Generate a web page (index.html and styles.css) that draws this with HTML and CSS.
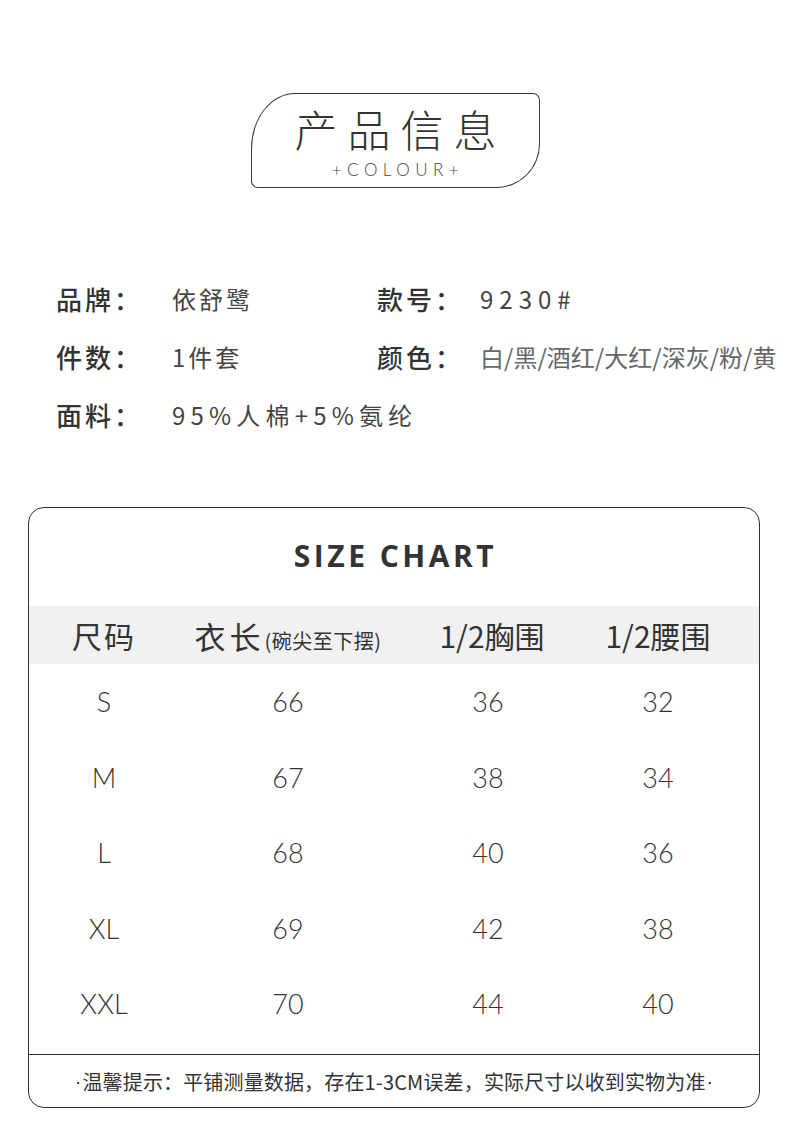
FILE: index.html
```html
<!DOCTYPE html>
<html lang="zh-CN">
<head>
<meta charset="utf-8">
<title>产品信息</title>
<link rel="stylesheet" href="styles.css">
</head>
<body>
<div class="page">
  <section class="heading">
    <div class="heading-box">
      <div class="heading-title">产品信息</div>
      <div class="heading-sub">+COLOUR+</div>
    </div>
  </section>

  <section class="info">
    <div class="info-label">品牌：</div>
    <div class="info-value spaced">依舒鹭</div>
    <div class="info-label">款号：</div>
    <div class="info-value code">9230#</div>

    <div class="info-label">件数：</div>
    <div class="info-value spaced">1件套</div>
    <div class="info-label">颜色：</div>
    <div class="info-value light">白/黑/酒红/大红/深灰/粉/黄</div>

    <div class="info-label">面料：</div>
    <div class="info-value num wide">95%人棉+5%氨纶</div>
  </section>

  <section class="chart">
    <div class="chart-title">SIZE CHART</div>
    <div class="chart-head">
      <div class="cell">尺码</div>
      <div class="cell"><span class="head-big">衣长</span><span class="head-small">(碗尖至下摆)</span></div>
      <div class="cell">1/2胸围</div>
      <div class="cell">1/2腰围</div>
    </div>
    <div class="chart-body">
      <div class="chart-row"><div class="cell">S</div><div class="cell">66</div><div class="cell">36</div><div class="cell">32</div></div>
      <div class="chart-row"><div class="cell">M</div><div class="cell">67</div><div class="cell">38</div><div class="cell">34</div></div>
      <div class="chart-row"><div class="cell">L</div><div class="cell">68</div><div class="cell">40</div><div class="cell">36</div></div>
      <div class="chart-row"><div class="cell">XL</div><div class="cell">69</div><div class="cell">42</div><div class="cell">38</div></div>
      <div class="chart-row"><div class="cell">XXL</div><div class="cell">70</div><div class="cell">44</div><div class="cell">40</div></div>
    </div>
    <div class="chart-note"><span class="dot">·</span>温馨提示：平铺测量数据，存在1-3CM误差，实际尺寸以收到实物为准<span class="dot">·</span></div>
  </section>
</div>
</body>
</html>
```

FILE: styles.css
```css
* { box-sizing: border-box; }
html, body { margin: 0; padding: 0; background: #fff; }
body {
  font-family: "Noto Sans CJK SC", "Noto Sans", sans-serif;
  color: #333;
}
.page {
  width: 790px;
  padding-top: 93px;
}

/* heading */
.heading { display: flex; justify-content: center; }
.heading-box {
  width: 289px;
  height: 95px;
  border: 1px solid #3a3a3a;
  border-radius: 44px 7px 44px 7px / 56px 7px 44px 7px;
  display: flex;
  flex-direction: column;
  align-items: center;
  padding-top: 11px;
  margin-left: 1px;
}
.heading-title {
  font-size: 43px;
  line-height: 46px;
  letter-spacing: 10px;
  margin-right: -10px;
  font-weight: 300;
  color: #333;
}
.heading-sub {
  font-family: "Lato", "Open Sans", sans-serif;
  font-weight: 300;
  font-size: 17px;
  line-height: 22px;
  letter-spacing: 5.5px;
  margin-top: 8px;
  margin-left: 5px;
  color: #444;
}

/* info */
.info {
  margin-top: 81px;
  padding-left: 56px;
  display: grid;
  grid-template-columns: 116px 205px 103px auto;
  grid-auto-rows: 58px;
  align-items: center;
}
.info-label {
  font-size: 26px;
  font-weight: 500;
  letter-spacing: 3px;
  color: #333;
  white-space: nowrap;
}
.info-value {
  font-size: 24px;
  color: #444;
  white-space: nowrap;
}
.info-value.spaced { letter-spacing: 3px; }
.info-value.num { letter-spacing: 5.2px; }
.info-value.code { letter-spacing: 6px; }
.info-value.light { color: #666; letter-spacing: 0; }
.info-value.wide { grid-column: 2 / 5; }

/* chart */
.chart {
  margin: 64px 0 0 28px;
  width: 732px;
  height: 601px;
  border: 1px solid #333;
  border-radius: 16px;
  overflow: hidden;
  display: flex;
  flex-direction: column;
}
.chart-title {
  height: 98px;
  display: flex;
  align-items: center;
  justify-content: center;
  font-family: "Open Sans", "Lato", sans-serif;
  font-weight: 700;
  font-size: 30px;
  letter-spacing: 3.5px;
  color: #333;
  padding-bottom: 4px;
  padding-left: 3px;
}
.chart-head, .chart-row {
  display: grid;
  grid-template-columns: 150px 218px 182px 158px 1fr;
  align-items: center;
}
.chart-head {
  height: 58px;
  background: #f1f1f1;
  font-size: 30px;
  color: #333;
}
.chart-head .cell { text-align: center; white-space: nowrap; }
.chart-head .cell:first-child { letter-spacing: 2px; }
.chart-head .cell:nth-child(3) { padding-left: 8px; }
.head-big { font-size: 31px; letter-spacing: 4px; }
.head-small { font-size: 20px; letter-spacing: 0.5px; }
.chart-body { height: 390px; }
.chart-row {
  height: 75.5px;
  font-family: "Lato", "Open Sans", sans-serif;
  font-weight: 300;
  font-size: 27px;
  color: #333;
}
.chart-row .cell { text-align: center; }
.chart-note {
  flex: 1;
  border-top: 1px solid #333;
  display: flex;
  align-items: center;
  justify-content: center;
  font-size: 20px;
  color: #333;
  letter-spacing: 0.15px;
}
.dot {
  font-family: "Liberation Sans", sans-serif;
  font-size: 20px;
  margin: 0 1px;
}
```
